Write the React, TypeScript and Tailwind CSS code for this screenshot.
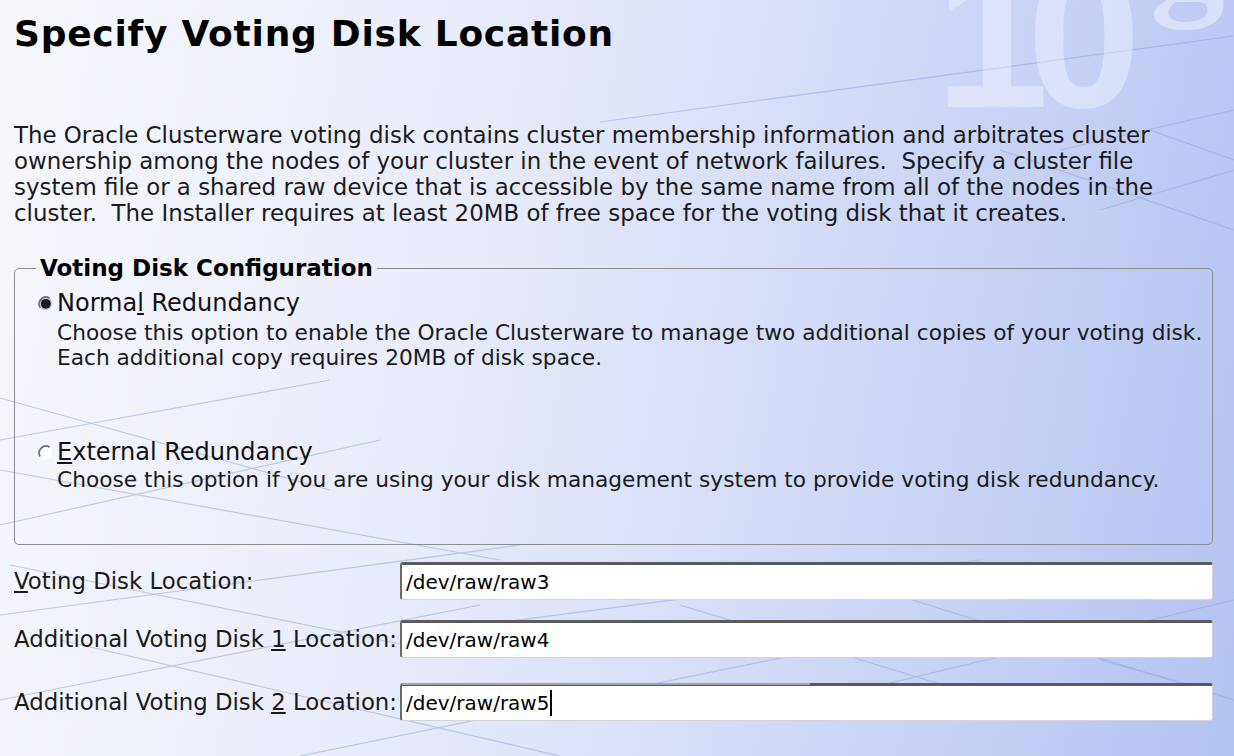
import React from 'react';

const Radio = ({ checked }: { checked: boolean }) => (
  <svg width="15" height="15" viewBox="0 0 14 14" className="shrink-0">
    <circle cx="7" cy="7" r="6.3" fill={checked ? '#c4c7d2' : '#ffffff'} />
    <path d="M2.1 10.8 A6.3 6.3 0 0 1 10.8 2.1" fill="none" stroke="#707070" strokeWidth="1.6" />
    {checked && <circle cx="7.3" cy="7.3" r="4.6" fill="#1c1c1c" />}
  </svg>
);

const Field = ({ value, caret = false, dimLeft = false }: { value: string; caret?: boolean; dimLeft?: boolean }) => (
  <div className="relative flex h-[38px] flex-1 items-center rounded-[3px] border border-[#d4d4d4] border-t-[3px] border-t-[#5a5a5a] border-l-[2px] border-l-[#6a6a6a] bg-white pl-[4px]">
    {dimLeft && <div className="absolute -top-[3px] left-0 h-[2px] w-[408px] bg-[#a4a4a4]" />}
    <span className="text-[20px] leading-none text-black">{value}</span>
    {caret && <span className="ml-[1px] h-[26px] w-[2px] bg-black" />}
  </div>
);

export default function App() {
  return (
    <div className="relative h-[756px] w-[1234px] overflow-hidden bg-[linear-gradient(100deg,#f7f8fd_0%,#e8ebfa_38%,#ccd5f5_72%,#b5c3f3_100%)] font-['DejaVu_Sans',sans-serif] text-[#111]">
      {/* background watermark and perspective grid */}
      <svg className="absolute inset-0" width="1234" height="756" viewBox="0 0 1234 756">
        <g stroke="#8fa1e4" strokeWidth="1.2" fill="none" opacity="0.5">
          <line x1="600" y1="122" x2="1234" y2="36" />
          <line x1="1000" y1="150" x2="1234" y2="230" />
          <line x1="1060" y1="150" x2="1234" y2="110" />
          <line x1="1100" y1="210" x2="1234" y2="170" />
          <line x1="1150" y1="130" x2="1234" y2="160" />
          <line x1="0" y1="398" x2="330" y2="490" />
          <line x1="0" y1="440" x2="330" y2="380" />
          <line x1="0" y1="470" x2="500" y2="560" />
          <line x1="0" y1="525" x2="380" y2="440" />
          <line x1="0" y1="615" x2="520" y2="545" />
          <line x1="10" y1="565" x2="430" y2="650" />
          <line x1="0" y1="700" x2="480" y2="605" />
          <line x1="60" y1="640" x2="560" y2="756" />
          <line x1="300" y1="756" x2="820" y2="650" />
          <line x1="680" y1="605" x2="960" y2="690" />
          <line x1="820" y1="700" x2="1234" y2="600" />
          <line x1="1100" y1="660" x2="1210" y2="690" />
          <line x1="480" y1="625" x2="980" y2="560" />
          <line x1="800" y1="565" x2="1234" y2="700" />
        </g>
      </svg>
      <div className="absolute -top-[46px] left-[935px] font-['Liberation_Sans',sans-serif] text-[205px] font-bold leading-[0.8] tracking-[-22px] text-white/35 select-none">
        10
      </div>
      <div className="absolute -top-[129px] left-[1150px] font-['Liberation_Serif',serif] text-[150px] font-bold leading-none text-white/40 select-none">
        g
      </div>

      <div className="relative pl-[14px] pr-[21px]">
        <h1 className="pt-[12px] text-[36px] font-bold leading-[44px] tracking-[0.75px] text-black">Specify Voting Disk Location</h1>

        <p className="mt-[66px] text-[22.9px] leading-[26px] text-[#1a1a1a]">
          The Oracle Clusterware voting disk contains cluster membership information and arbitrates cluster
          <br />
          ownership among the nodes of your cluster in the event of network failures.&nbsp; Specify a cluster file
          <br />
          system file or a shared raw device that is accessible by the same name from all of the nodes in the
          <br />
          cluster.&nbsp; The Installer requires at least 20MB of free space for the voting disk that it creates.
        </p>

        <fieldset className="mt-[30px] rounded-[5px] border border-[#8e8e8e] pb-[52px] pl-[25px] pr-[4px]">
          <legend className="-ml-[4px] px-[4px] text-[23px] font-bold leading-[24px] text-black">Voting Disk Configuration</legend>
          <div className="mt-[9px] -ml-[2px] flex items-center gap-[4px] text-[24px] leading-[28px]">
            <Radio checked />
            <span>
              Norma<span className="underline underline-offset-2">l</span> Redundancy
            </span>
          </div>
          <div className="mt-[3px] whitespace-nowrap pl-[17px] text-[21.7px] leading-[25px] text-[#1a1a1a]">
            Choose this option to enable the Oracle Clusterware to manage two additional copies of your voting disk.
            <br />
            Each additional copy requires 20MB of disk space.
          </div>
          <div className="mt-[68px] -ml-[2px] flex items-center gap-[4px] text-[24px] leading-[28px]">
            <Radio checked={false} />
            <span>
              <span className="underline underline-offset-2">E</span>xternal Redundancy
            </span>
          </div>
          <div className="mt-[1px] whitespace-nowrap pl-[17px] text-[21.7px] leading-[25px] text-[#1a1a1a]">
            Choose this option if you are using your disk management system to provide voting disk redundancy.
          </div>
        </fieldset>

        <div className="mt-[17px] flex flex-col text-[22.8px] text-[#1a1a1a]">
          <div className="flex items-center">
            <label className="w-[386px] shrink-0">
              <span className="underline underline-offset-2">V</span>oting Disk Location:
            </label>
            <Field value="/dev/raw/raw3" />
          </div>
          <div className="mt-[20px] flex items-center">
            <label className="w-[386px] shrink-0">
              Additional Voting Disk <span className="underline underline-offset-2">1</span> Location:
            </label>
            <Field value="/dev/raw/raw4" />
          </div>
          <div className="mt-[25px] flex items-center">
            <label className="w-[386px] shrink-0">
              Additional Voting Disk <span className="underline underline-offset-2">2</span> Location:
            </label>
            <Field value="/dev/raw/raw5" caret dimLeft />
          </div>
        </div>
      </div>
    </div>
  );
}
